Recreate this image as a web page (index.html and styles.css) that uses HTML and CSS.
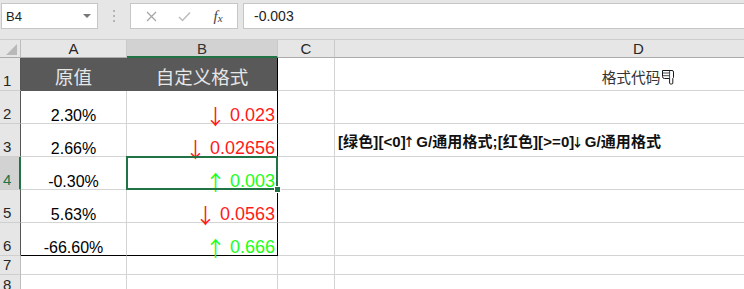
FILE: index.html
```html
<!DOCTYPE html>
<html lang="zh-CN">
<head>
  <meta charset="UTF-8">
  <title>自定义格式</title>
  <link rel="stylesheet" href="styles.css">
</head>
<body>
  <div class="topbar">
    <div class="namebox">
      <span>B4</span>
      <span class="caret"></span>
    </div>
    <div class="grip">
      <svg width="2" height="12" viewBox="0 0 2 12"><rect y="0" width="2" height="2" fill="#b4b4b4"/><rect y="5" width="2" height="2" fill="#b4b4b4"/><rect y="10" width="2" height="2" fill="#b4b4b4"/></svg>
    </div>
    <div class="fbox">
      <span class="ficon">
        <svg width="11" height="11" viewBox="0 0 11 11"><path d="M1 1L10 10M10 1L1 10" stroke="#a6a6a6" stroke-width="1.3" fill="none"/></svg>
      </span>
      <span class="ficon">
        <svg width="13" height="11" viewBox="0 0 13 11"><path d="M1 6L4.5 9.5L12 1.5" stroke="#bdbdbd" stroke-width="1.5" fill="none"/></svg>
      </span>
      <span class="ficon fx"><i>f</i><i class="x">x</i></span>
    </div>
    <div class="formula">-0.003</div>
  </div>

  <div class="sheet">
    <!-- column headers -->
    <div class="corner"><span class="tri"></span></div>
    <div class="col-hd">A</div>
    <div class="col-hd sel">B</div>
    <div class="col-hd">C</div>
    <div class="col-hd">D</div>

    <!-- row 1 -->
    <div class="row-hd rng">1</div>
    <div class="cell title">原值</div>
    <div class="cell title b-right">自定义格式</div>
    <div class="cell"></div>
    <div class="cell note">格式代码<svg class="hand" width="14" height="16" viewBox="0 0 14 16"><path d="M1.5 1.5H11Q12.5 1.5 12.5 3V8.5L11.8 9.3V14Q11.8 15 10.8 15H9.6Q8.6 15 8.6 14V9.5H3.5Q1.5 9.5 1.5 7.5Z" fill="#fff" stroke="#1a1a1a" stroke-width="1"/><path d="M1.5 4H8.6M1.5 6.7H8.6M8.6 1.5V9.5" stroke="#1a1a1a" stroke-width="0.8" fill="none"/></svg></div>

    <!-- row 2 -->
    <div class="row-hd rng">2</div>
    <div class="cell pct">2.30%</div>
    <div class="cell fmt red b-right"><span class="arrow">↓</span>0.023</div>
    <div class="cell"></div>
    <div class="cell"></div>

    <!-- row 3 -->
    <div class="row-hd rng">3</div>
    <div class="cell pct">2.66%</div>
    <div class="cell fmt red b-right"><span class="arrow">↓</span>0.02656</div>
    <div class="cell"></div>
    <div class="cell code">[绿色][&lt;0]<span class="small-arrow">↑</span>&nbsp;G/通用格式;[红色][&gt;=0]<span class="small-arrow">↓</span>&nbsp;G/通用格式</div>

    <!-- row 4 -->
    <div class="row-hd rng sel">4</div>
    <div class="cell pct">-0.30%</div>
    <div class="cell fmt green b-right active"><span class="arrow">↑</span>0.003</div>
    <div class="cell"></div>
    <div class="cell"></div>

    <!-- row 5 -->
    <div class="row-hd rng">5</div>
    <div class="cell pct">5.63%</div>
    <div class="cell fmt red b-right"><span class="arrow">↓</span>0.0563</div>
    <div class="cell"></div>
    <div class="cell"></div>

    <!-- row 6 -->
    <div class="row-hd rng">6</div>
    <div class="cell pct b-bottom">-66.60%</div>
    <div class="cell fmt green b-right b-bottom"><span class="arrow">↑</span>0.666</div>
    <div class="cell"></div>
    <div class="cell"></div>

    <!-- row 7 -->
    <div class="row-hd">7</div>
    <div class="cell"></div>
    <div class="cell"></div>
    <div class="cell"></div>
    <div class="cell"></div>

    <!-- row 8 -->
    <div class="row-hd">8</div>
    <div class="cell"></div>
    <div class="cell"></div>
    <div class="cell"></div>
    <div class="cell"></div>
  </div>
</body>
</html>
```

FILE: styles.css
```css
body {
  margin: 0;
  width: 744px;
  height: 289px;
  overflow: hidden;
  background: #fff;
  font-family: "Liberation Sans", "Noto Sans CJK SC", sans-serif;
  color: #000;
}

/* formula bar */
.topbar {
  height: 40px;
  box-sizing: border-box;
  padding-top: 3px;
  background: #e6e6e6;
  border-bottom: 1px solid #cdcdcd;
  display: flex;
  align-items: flex-start;
}
.namebox {
  margin-left: 1px;
  width: 97px;
  height: 26px;
  box-sizing: border-box;
  background: #fff;
  border: 1px solid #c6c6c6;
  display: flex;
  align-items: center;
  justify-content: space-between;
  padding: 0 6px 0 4px;
  font-size: 13px;
  color: #222;
}
.caret {
  width: 0;
  height: 0;
  border-left: 4px solid transparent;
  border-right: 4px solid transparent;
  border-top: 4px solid #777;
}
.grip {
  width: 32px;
  height: 26px;
  display: flex;
  align-items: center;
  justify-content: center;
}
.fbox {
  width: 108px;
  height: 26px;
  box-sizing: border-box;
  background: #fff;
  border: 1px solid #c6c6c6;
  padding-left: 4px;
  display: grid;
  grid-template-columns: 33px 33px 34px;
  align-items: center;
}
.ficon {
  display: flex;
  justify-content: center;
  align-items: center;
  height: 24px;
}
.fx {
  font-family: "Liberation Serif", serif;
  font-size: 15px;
  color: #444;
}
.fx .x {
  font-size: 11px;
  margin-top: 4px;
}
.formula {
  flex: 1;
  margin-left: 5px;
  height: 26px;
  box-sizing: border-box;
  background: #fff;
  border: 1px solid #c6c6c6;
  border-right: none;
  padding-left: 10px;
  display: flex;
  align-items: center;
  font-size: 14px;
  color: #222;
}

/* sheet grid */
.sheet {
  display: grid;
  grid-template-columns: 21px 106px 151px 57px 608px;
  grid-template-rows: 18px repeat(6, 33px) 19px 20px;
}
.sheet > div {
  box-sizing: border-box;
  border-right: 1px solid #d4d4d4;
  border-bottom: 1px solid #d4d4d4;
}
.corner {
  background: #e6e6e6;
  position: relative;
  border-right-color: #bdbdbd !important;
  border-bottom-color: #ababab !important;
}
.tri {
  position: absolute;
  right: 3px;
  bottom: 2px;
  width: 0;
  height: 0;
  border-left: 11px solid transparent;
  border-bottom: 11px solid #b9b9b9;
}
.col-hd {
  background: #e6e6e6;
  border-right-color: #c9c9c9 !important;
  border-bottom-color: #ababab !important;
  font-size: 15px;
  line-height: 17px;
  text-align: center;
  color: #262626;
}
.col-hd.sel {
  background: #d2d2d2;
  border-bottom: 2px solid #217346 !important;
  color: #333;
}
.row-hd {
  background: #e6e6e6;
  border-right-color: #bdbdbd !important;
  border-bottom-color: #cfcfcf !important;
  font-size: 15px;
  line-height: 16px;
  padding: 0 0 1px 3px;
  display: flex;
  align-items: flex-end;
  color: #262626;
}
.row-hd.rng {
  border-right-color: #555 !important;
}
.row-hd.sel {
  background: #d2d2d2;
  border-right: 2px solid #217346 !important;
  color: #217346;
}

.cell {
  display: flex;
  align-items: flex-end;
  white-space: nowrap;
}
.title {
  background: #595959;
  border-color: #595959 !important;
  justify-content: center;
  font-family: "Noto Sans CJK SC", sans-serif;
  font-size: 18.5px;
  line-height: 20px;
  padding-bottom: 4px;
  color: #e6e6e6;
}
.pct {
  justify-content: center;
  font-size: 16px;
  line-height: 14px;
}
.fmt {
  justify-content: flex-end;
  padding-right: 2px;
  font-size: 18px;
  line-height: 15px;
}
.arrow {
  font-family: "Noto Sans CJK SC", sans-serif;
  font-size: 21px;
  line-height: 15px;
  margin-right: 4px;
}
.red { color: #ff1a1a; }
.green { color: #1aff1a; }
.b-right { border-right-color: #000 !important; }
.b-bottom { border-bottom-color: #000 !important; }
.title.b-right { border-right-color: #000 !important; }

.note {
  justify-content: center;
  align-items: center;
  padding-top: 6px;
  font-family: "Noto Sans CJK SC", sans-serif;
  font-size: 14.67px;
  line-height: 18px;
  color: #333;
}
.hand {
  margin-left: 1px;
}
.code {
  padding-left: 3px;
  padding-bottom: 5px;
  font-size: 15px;
  letter-spacing: 0.1px;
  font-weight: bold;
  line-height: 18px;
  color: #111;
}
.small-arrow {
  display: inline-block;
  width: 6px;
  text-indent: -3px;
  font-family: "Noto Sans CJK SC", sans-serif;
  font-size: 12px;
  letter-spacing: 0;
  vertical-align: 3px;
}

/* active cell frame */
.active {
  position: relative;
}
.active::after {
  content: "";
  position: absolute;
  top: -1px;
  left: -1px;
  right: -1px;
  bottom: -1px;
  border: 2px solid #217346;
}
.active::before {
  content: "";
  position: absolute;
  right: -4px;
  bottom: -4px;
  width: 5px;
  height: 5px;
  background: #217346;
  border: 1px solid #fff;
  z-index: 2;
}
```
